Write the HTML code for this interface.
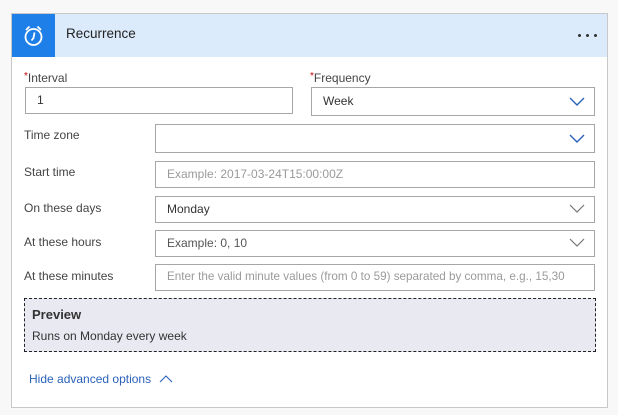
<!DOCTYPE html>
<html><head><style>
body{margin:0;width:618px;height:415px;background:#f8f8f8;font-family:"Segoe UI","Liberation Sans",sans-serif;position:relative;overflow:hidden;font-size:12px;color:#333}
.card{position:absolute;left:11px;top:13px;width:597px;height:395px;background:#fff;border:1px solid #c8c8c8;box-sizing:border-box}
.hdr{position:absolute;left:0;top:0;right:0;height:43px;background:#dcebfc}
.ico{position:absolute;left:0;top:0;width:43px;height:43px;background:#1e7fe8}
.abs{position:absolute}
.box{position:absolute;border:1px solid #a6a6a6;background:#fff;box-sizing:border-box;height:27px}
.lbl{position:absolute;left:24px;font-size:12px;color:#444}
.ph{color:#9a9a9a}
.txt{position:absolute;left:11px;top:5px;font-size:12px}
.ch{position:absolute;right:9px;top:7px}
.dot{position:absolute;top:20px;width:3px;height:3px;background:#333;border-radius:50%}
</style></head><body>
<div class="card">
 <div class="hdr">
  <div class="ico"><svg width="43" height="43" viewBox="0 0 43 43"><g fill="none" stroke="#fff" stroke-width="1.8"><circle cx="21.5" cy="23" r="8"/><path d="M22.5 18.5l-1 5.5-2 2.5"/><path d="M14 16l3.5-3.5M29 16l-3.5-3.5"/></g></svg></div>
  <div class="abs" style="left:54px;top:12px;font-size:13.5px;color:#222">Recurrence</div>
  <div class="dot" style="left:566px"></div><div class="dot" style="left:574px"></div><div class="dot" style="left:582px"></div>
 </div>
</div>
<div class="abs" style="left:24px;top:71px;font-size:12px;color:#444"><span style="color:#c00;font-size:10px;vertical-align:top">*</span>Interval</div>
<div class="box" style="left:25px;top:87px;width:268px;height:27px"><div class="txt" style="top:5px">1</div></div>
<div class="abs" style="left:310px;top:71px;font-size:12px;color:#444"><span style="color:#c00;font-size:10px;vertical-align:top">*</span>Frequency</div>
<div class="box" style="left:311px;top:87px;width:284px;height:29px"><div class="txt" style="top:6px">Week</div><svg class="ch" style="top:9px" width="16" height="10"><path d="M1 1l7 7 7-7" fill="none" stroke="#2a62b8" stroke-width="1.4"/></svg></div>

<div class="lbl" style="top:128px">Time zone</div>
<div class="box" style="left:155px;top:124px;width:440px;height:29px"><svg class="ch" style="top:9px" width="16" height="10"><path d="M1 1l7 7 7-7" fill="none" stroke="#2a62b8" stroke-width="1.4"/></svg></div>
<div class="lbl" style="top:165px">Start time</div>
<div class="box" style="left:155px;top:161px;width:440px;height:27px"><div class="txt ph">Example: 2017-03-24T15:00:00Z</div></div>
<div class="lbl" style="top:201px">On these days</div>
<div class="box" style="left:155px;top:196px;width:440px;height:27px"><div class="txt">Monday</div><svg class="ch" width="16" height="10"><path d="M1 1l7 7 7-7" fill="none" stroke="#777" stroke-width="1.2"/></svg></div>
<div class="lbl" style="top:235px">At these hours</div>
<div class="box" style="left:155px;top:230px;width:440px;height:27px"><div class="txt" style="color:#555">Example: 0, 10</div><svg class="ch" width="16" height="10"><path d="M1 1l7 7 7-7" fill="none" stroke="#777" stroke-width="1.2"/></svg></div>
<div class="lbl" style="top:269px">At these minutes</div>
<div class="box" style="left:155px;top:264px;width:440px;height:27px"><div class="txt ph" style="font-size:11.7px">Enter the valid minute values (from 0 to 59) separated by comma, e.g., 15,30</div></div>

<div class="abs" style="left:24px;top:298px;width:572px;height:54px;box-sizing:border-box;border:1px dashed #222;background:#e9e9f2">
 <div class="abs" style="left:7px;top:8px;font-size:13px;font-weight:bold;color:#333">Preview</div>
 <div class="abs" style="left:7px;top:30px;font-size:12px;color:#333">Runs on Monday every week</div>
</div>
<div class="abs" style="left:29px;top:372px;font-size:12px;color:#2a62b8">Hide advanced options <svg width="14" height="8" style="margin-left:5px"><path d="M1 7l6-6 6 6" fill="none" stroke="#2a62b8" stroke-width="1.1"/></svg></div>
</body></html>
